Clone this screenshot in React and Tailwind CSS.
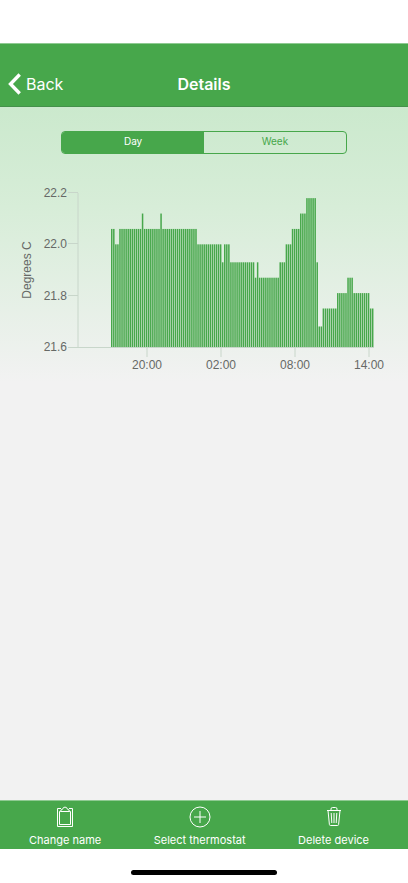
import { useState } from "react";

// [degrees, number of consecutive ten-minute readings]
const readings = [
  [22.06, 2],
  [22.0, 2],
  [22.06, 11],
  [22.12, 1],
  [22.06, 8],
  [22.12, 1],
  [22.06, 17],
  [22.0, 12],
  [21.93, 1],
  [22.0, 3],
  [21.93, 12],
  [21.87, 1],
  [21.93, 1],
  [21.87, 10],
  [21.93, 3],
  [22.0, 3],
  [22.06, 4],
  [22.12, 3],
  [22.18, 5],
  [21.93, 1],
  [21.68, 2],
  [21.75, 7],
  [21.81, 5],
  [21.87, 3],
  [21.81, 8],
  [21.75, 2],
].flatMap(([value, count]) => Array(count).fill(value));

const yTicks = [22.2, 22.0, 21.8, 21.6];
const xTicks = [
  ["20:00", 147],
  ["02:00", 221],
  ["08:00", 295],
  ["14:00", 369],
];

const BASE = 167;
const STEP = 263 / 128;
const toY = (value) => BASE - ((value - 21.6) / 0.6) * 154;

function TemperatureChart() {
  return (
    <svg
      viewBox="0 0 408 200"
      className="block w-full font-['Liberation_Sans',Arial,sans-serif] text-[12px]"
      role="img"
      aria-label="Temperature over time"
    >
      <g stroke="#c8d6ca" strokeWidth="1" fill="none">
        <path d={`M78 13V${BASE}`} />
        <path d={`M68 ${BASE + 0.5}H374`} />
        {yTicks.slice(0, 3).map((t) => (
          <path key={t} d={`M68 ${Math.round(toY(t)) - 0.5}H78`} />
        ))}
        {xTicks.map(([label, x]) => (
          <path key={label} d={`M${x} ${BASE + 1}v9`} />
        ))}
      </g>

      <g fill="#47a74b">
        {readings.map((value, i) => (
          <rect
            key={i}
            x={111 + i * STEP}
            y={toY(value)}
            width="1.5"
            height={BASE - toY(value)}
          />
        ))}
      </g>

      <g fill="#666966">
        {yTicks.map((t) => (
          <text key={t} x="67" y={Math.round(toY(t)) + 4} textAnchor="end">
            {t.toFixed(1)}
          </text>
        ))}
        {xTicks.map(([label, x]) => (
          <text key={label} x={x} y="189" textAnchor="middle">
            {label}
          </text>
        ))}
        <text transform="translate(31 90) rotate(-90)" textAnchor="middle">
          Degrees C
        </text>
      </g>
    </svg>
  );
}

function ClipboardIcon() {
  return (
    <svg width="18" height="22" viewBox="0 0 18 22" fill="none" stroke="currentColor">
      <path d="M5 2.5H1.5v18h15v-18H13" />
      <path d="M4.5 5.5h-1v13h11v-13h-1" />
      <path d="M4.5 5.5q0-2 2-2.2q.5-2.2 2.5-2.2t2.5 2.2q2 .2 2 2.2z" />
    </svg>
  );
}

function PlusIcon() {
  return (
    <svg width="22" height="22" viewBox="0 0 22 22" fill="none" stroke="currentColor">
      <circle cx="11" cy="11" r="10" />
      <path d="M11 5v12M5 11h12" />
    </svg>
  );
}

function TrashIcon() {
  return (
    <svg width="18" height="22" viewBox="0 0 18 22" fill="none" stroke="currentColor">
      <path d="M2 4.5h14M6 4.3V3q0-1.5 1.5-1.5h3q1.5 0 1.5 1.5v1.3" />
      <path d="M3 4.5l1.4 14q.1 1 1.1 1h7q1 0 1.1-1l1.4-14" />
      <path d="M6.2 7l.6 10M9 7v10M11.8 7l-.6 10" />
    </svg>
  );
}

function ToolbarButton({ icon, text }) {
  return (
    <button className="flex flex-col items-center gap-1 text-[11px] leading-4">
      {icon}
      <span>{text}</span>
    </button>
  );
}

export default function App() {
  const [range, setRange] = useState("Day");

  return (
    <div className="flex min-h-screen flex-col bg-white font-['Inter',sans-serif]">
      <header className="mt-[43px] grid h-16 grid-cols-3 items-end border-t border-b border-t-[#8fca92] border-b-[#44914a] bg-[#47a74b] px-2 pb-2.5 text-white">
        <button className="flex items-center gap-1 justify-self-start">
          <svg width="14" height="22" viewBox="0 0 14 22" fill="none" stroke="currentColor" strokeWidth="3.4">
            <path d="M11.7 1.5L2.5 11l9.2 9.5" />
          </svg>
          <span className="text-base leading-6">Back</span>
        </button>
        <h1 className="text-center text-base leading-6 font-semibold">Details</h1>
      </header>

      <main className="flex-1 bg-[#f2f2f2] bg-[linear-gradient(#cbe9cd,#d7edd8_100px,#f2f2f2_275px)] pt-6">
        <div className="mx-auto grid h-[23px] w-[70%] grid-cols-2 overflow-hidden rounded border border-[#47a74b] text-[10px] leading-4">
          {["Day", "Week"].map((name) => (
            <button
              key={name}
              onClick={() => setRange(name)}
              aria-pressed={range === name}
              className={
                range === name
                  ? "bg-[#47a74b] pb-1 text-white"
                  : "pb-1 text-[#47a74b]"
              }
            >
              {name}
            </button>
          ))}
        </div>

        <div className="mt-[26px]">
          <TemperatureChart />
        </div>
      </main>

      <nav className="flex justify-between border-t border-[#8fca92] bg-[#47a74b] pt-[5px] pr-[39px] pb-px pl-[29px] text-white">
        <ToolbarButton icon={<ClipboardIcon />} text="Change name" />
        <ToolbarButton icon={<PlusIcon />} text="Select thermostat" />
        <ToolbarButton icon={<TrashIcon />} text="Delete device" />
      </nav>

      <div className="flex h-[34px] items-end justify-center pb-2">
        <div className="h-[5px] w-[146px] rounded-full bg-black" />
      </div>
    </div>
  );
}
